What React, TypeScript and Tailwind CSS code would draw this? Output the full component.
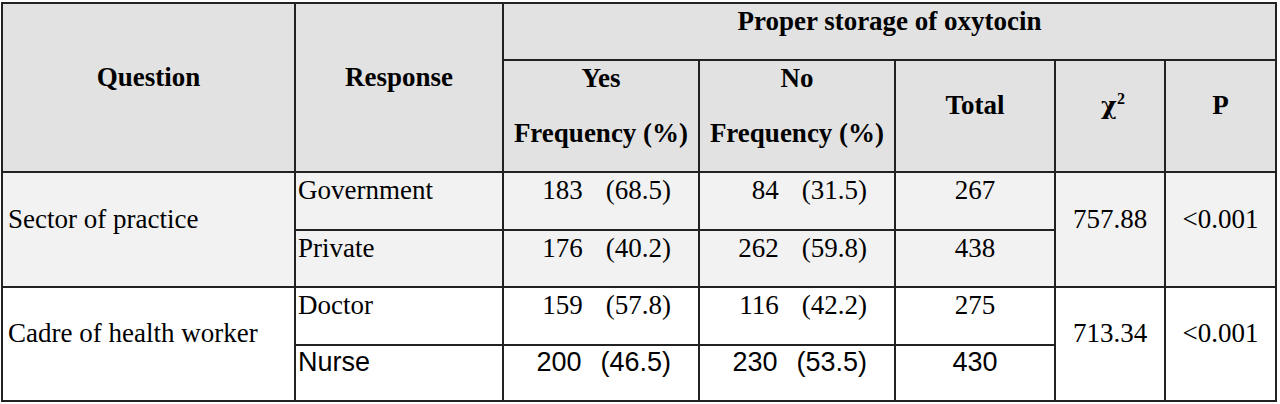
import type { ReactNode } from 'react'

const serif = "font-['Liberation_Serif','Times_New_Roman',serif]"
const sans = "font-['Liberation_Sans',Arial,sans-serif]"

type Row = {
  response: string
  yes: [string, string]
  no: [string, string]
  total: string
  sans?: boolean
}

const groups: { question: string; chi: string; p: string; bg: string; rows: Row[] }[] = [
  {
    question: 'Sector of practice',
    chi: '757.88',
    p: '<0.001',
    bg: 'bg-[#f2f2f2]',
    rows: [
      { response: 'Government', yes: ['183', '(68.5)'], no: ['84', '(31.5)'], total: '267' },
      { response: 'Private', yes: ['176', '(40.2)'], no: ['262', '(59.8)'], total: '438' },
    ],
  },
  {
    question: 'Cadre of health worker',
    chi: '713.34',
    p: '<0.001',
    bg: 'bg-white',
    rows: [
      { response: 'Doctor', yes: ['159', '(57.8)'], no: ['116', '(42.2)'], total: '275' },
      { response: 'Nurse', yes: ['200', '(46.5)'], no: ['230', '(53.5)'], total: '430', sans: true },
    ],
  },
]

const rowHeights = ['h-[58px]', 'h-[57px]', 'h-[58px]', 'h-[56px]']

function Th({ children, className = '', ...rest }: { children: ReactNode; className?: string; colSpan?: number; rowSpan?: number }) {
  return (
    <th
      {...rest}
      className={`border-2 border-[#222] align-middle pb-[22px] text-center font-bold leading-[30px] ${className}`}
    >
      {children}
    </th>
  )
}

function Pair({ v, sans: isSans }: { v: [string, string]; sans?: boolean }) {
  return (
    <span className="whitespace-nowrap">
      {v[0]}
      <span className={isSans ? 'ml-[19px]' : 'ml-[23px]'}>{v[1]}</span>
    </span>
  )
}

export default function App() {
  return (
    <div className={`min-h-[404px] bg-white pt-[2px] pl-[1px] text-[27px] text-black ${serif}`}>
      <table className="w-[1276px] table-fixed border-collapse border-2 border-[#222]">
        <colgroup>
          <col className="w-[293px]" />
          <col className="w-[208px]" />
          <col className="w-[196px]" />
          <col className="w-[196px]" />
          <col className="w-[160px]" />
          <col className="w-[110px]" />
          <col className="w-[111px]" />
        </colgroup>
        <thead className="bg-[#e2e2e2]">
          <tr className="h-[57px]">
            <Th rowSpan={2} className="pb-[14px]">Question</Th>
            <Th rowSpan={2} className="pb-[14px]">Response</Th>
            <Th colSpan={5}>Proper storage of oxytocin</Th>
          </tr>
          <tr className="h-[112px]">
            <Th className="whitespace-nowrap px-0">
              <div>Yes</div>
              <div className="mt-[25px]">Frequency (%)</div>
            </Th>
            <Th className="whitespace-nowrap px-0">
              <div>No</div>
              <div className="mt-[25px]">Frequency (%)</div>
            </Th>
            <Th>Total</Th>
            <Th className="pl-[6px]">
              <span className="font-['DejaVu_Serif',serif] text-[24px]">χ</span>
              <span className="inline-block align-[10px] text-[16px] leading-none">2</span>
            </Th>
            <Th>P</Th>
          </tr>
        </thead>
        <tbody>
          {groups.map((g, gi) =>
            g.rows.map((r, ri) => {
              const font = r.sans ? sans : serif
              const td = `border-2 border-[#222] align-middle pb-[22px] leading-[30px] ${font}`
              return (
                <tr key={r.response} className={`${rowHeights[gi * 2 + ri]} ${g.bg}`}>
                  {ri === 0 && (
                    <td rowSpan={2} className={`border-2 border-[#222] align-middle pb-[22px] pl-[5px] leading-[30px] ${serif}`}>
                      {g.question}
                    </td>
                  )}
                  <td className={`${td} pl-[2px]`}>{r.response}</td>
                  <td className={`${td} pr-[27px] text-right`}>
                    <Pair v={r.yes} sans={r.sans} />
                  </td>
                  <td className={`${td} pr-[27px] text-right`}>
                    <Pair v={r.no} sans={r.sans} />
                  </td>
                  <td className={`${td} text-center`}>{r.total}</td>
                  {ri === 0 && (
                    <>
                      <td rowSpan={2} className={`border-2 border-[#222] align-middle pb-[22px] text-center leading-[30px] ${serif}`}>
                        {g.chi}
                      </td>
                      <td rowSpan={2} className={`border-2 border-[#222] align-middle pb-[22px] text-center leading-[30px] ${serif}`}>
                        {g.p}
                      </td>
                    </>
                  )}
                </tr>
              )
            })
          )}
        </tbody>
      </table>
    </div>
  )
}
